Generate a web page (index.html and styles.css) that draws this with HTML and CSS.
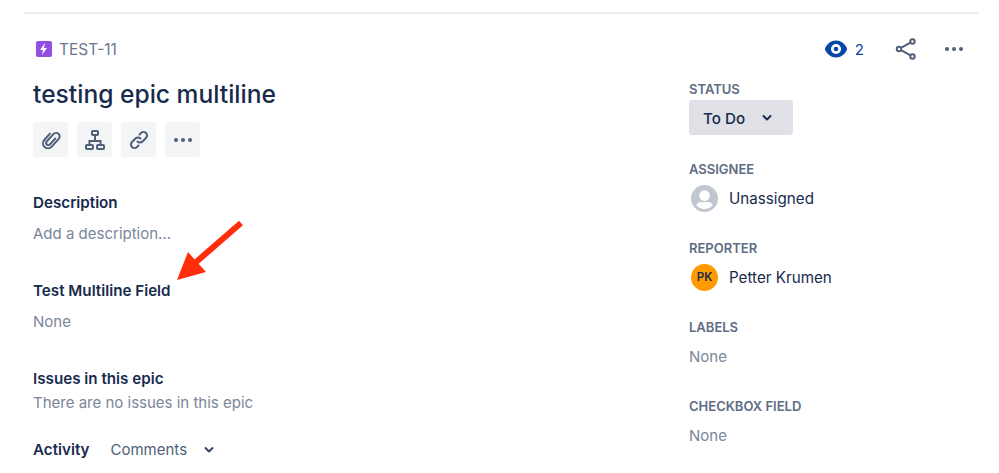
FILE: index.html
```html
<!DOCTYPE html>
<html lang="en">

<head>
    <meta charset="UTF-8">
    <title>TEST-11</title>
    <link rel="stylesheet" href="styles.css">
</head>

<body>
    <div class="rule"></div>

    <div class="issue">
        <div class="main">
            <div class="issue-key">
                <span class="epic-icon">
                    <svg width="10" height="12" viewBox="0 0 10 12"><path d="M6 0 1 7h3l-1 5 5-7H5z" fill="#fff"/></svg>
                </span>
                <span class="key-text">TEST-11</span>
            </div>

            <h1>testing epic multiline</h1>

            <div class="toolbar">
                <button class="tool">
                    <svg width="24" height="24" viewBox="0 0 24 24" fill="none" stroke="#505f79" stroke-width="2" stroke-linecap="round"><path transform="rotate(42 12 12)" d="M14.200 8v8a2.200 2.200 0 0 1-4.400 0V6a3.600 3.600 0 0 1 7.200 0v10.500a5 5 0 0 1-10 0V8"/></svg>
                </button>
                <button class="tool">
                    <svg width="24" height="24" viewBox="0 0 24 24" fill="none" stroke="#505f79" stroke-width="2"><rect x="9" y="3" width="6" height="4" rx="1"/><rect x="3" y="17" width="7" height="4" rx="1"/><rect x="14" y="17" width="7" height="4" rx="1"/><path d="M12 7v6M6.500 17v-4h11v4"/></svg>
                </button>
                <button class="tool">
                    <svg width="24" height="24" viewBox="0 0 24 24" fill="none" stroke="#505f79" stroke-width="2" stroke-linecap="round"><path d="M10.500 13.500a3.500 3.500 0 0 0 5 0l3.500-3.500a3.500 3.500 0 0 0-5-5l-1.500 1.500"/><path d="M13.500 10.500a3.500 3.500 0 0 0-5 0L5 14a3.500 3.500 0 0 0 5 5l1.500-1.500"/></svg>
                </button>
                <button class="tool">
                    <svg width="24" height="24" viewBox="0 0 24 24" fill="#505f79"><circle cx="5" cy="12" r="2"/><circle cx="12" cy="12" r="2"/><circle cx="19" cy="12" r="2"/></svg>
                </button>
            </div>

            <section class="field field-description">
                <h2>Description</h2>
                <p class="placeholder">Add a description...</p>
            </section>

            <section class="field field-multiline">
                <h2>Test Multiline Field</h2>
                <p class="placeholder">None</p>
            </section>

            <section class="field field-epic">
                <h2>Issues in this epic</h2>
                <p class="placeholder">There are no issues in this epic</p>
            </section>

            <div class="activity">
                <h2>Activity</h2>
                <span class="activity-filter">Comments</span>
                <svg width="10" height="8" viewBox="0 0 10 8" fill="none" stroke="#344563" stroke-width="2" stroke-linecap="round" stroke-linejoin="round"><path d="M1.500 2 5 5.500 8.500 2"/></svg>
            </div>
        </div>

        <aside class="side">
            <div class="actions">
                <span class="watchers">
                    <svg width="24" height="18" viewBox="0 0 24 18"><path d="M12 .5C6 .5 1.800 5.500.8 9c1 3.500 5.200 8.500 11.200 8.500S22.200 12.500 23.200 9C22.200 5.500 18 .5 12 .5z" fill="#0747a6"/><circle cx="12" cy="9" r="5" fill="#fff"/><circle cx="12" cy="9" r="2.300" fill="#0747a6"/></svg>
                    2
                </span>
                <svg class="share" width="24" height="24" viewBox="0 0 24 24" fill="none" stroke="#505f79" stroke-width="2"><circle cx="18.500" cy="4.500" r="2.200"/><circle cx="18.500" cy="19.500" r="2.200"/><circle cx="5" cy="12" r="2.200"/><path d="M7 10.900 16.500 5.600M7 13.100l9.500 5.300"/></svg>
                <svg class="more" width="24" height="24" viewBox="0 0 24 24" fill="#505f79"><circle cx="5" cy="12" r="2"/><circle cx="12" cy="12" r="2"/><circle cx="19" cy="12" r="2"/></svg>
            </div>

            <div class="side-field status-field">
                <h3>STATUS</h3>
                <button class="status">
                    To Do
                    <svg width="10" height="8" viewBox="0 0 10 8" fill="none" stroke="#172b4d" stroke-width="2" stroke-linecap="round" stroke-linejoin="round"><path d="M1.500 2 5 5.500 8.500 2"/></svg>
                </button>
            </div>

            <div class="side-field">
                <h3>ASSIGNEE</h3>
                <div class="person">
                    <span class="avatar">
                        <svg width="27" height="27" viewBox="0 0 28 28"><circle cx="14" cy="14" r="14" fill="#c1c7d0"/><circle cx="14" cy="11" r="5.500" fill="#fff"/><path d="M5.500 21c1-2.700 3-3.500 5-3.500h7c2 0 4 .8 5 3.500-2 2.500-5 4-8.500 4s-6.500-1.500-8.500-4z" fill="#fff"/></svg>
                    </span>
                    <span>Unassigned</span>
                </div>
            </div>

            <div class="side-field">
                <h3>REPORTER</h3>
                <div class="person">
                    <span class="avatar avatar-pk">PK</span>
                    <span>Petter Krumen</span>
                </div>
            </div>

            <div class="side-field">
                <h3>LABELS</h3>
                <p class="placeholder">None</p>
            </div>

            <div class="side-field">
                <h3>CHECKBOX FIELD</h3>
                <p class="placeholder">None</p>
            </div>
        </aside>

        <svg class="arrow" width="70" height="64" viewBox="0 0 70 64"><path d="M64 2 18 42" stroke="#ff2d0a" stroke-width="6" fill="none"/><path d="M0 59 11 31l18 20z" fill="#ff2d0a"/></svg>
    </div>
</body>

</html>
```

FILE: styles.css
```css
html,
body {
    height: 473px;
    overflow: hidden;
}

body {
    font-family: Inter, "Liberation Sans", sans-serif;
    margin: 0;
    padding: 12px 21px 0 24px;
    background-color: #fff;
    color: #172b4d;
}

h1,
h2,
h3,
p {
    margin: 0;
    font-weight: inherit;
}

.rule {
    height: 2px;
    background-color: #ebecf0;
}

.issue {
    position: relative;
    display: flex;
    padding-left: 9px;
}

.main {
    width: 656px;
}

.issue-key {
    display: flex;
    align-items: center;
    gap: 7px;
    height: 16px;
    margin-top: 27px;
    font-size: 15.500px;
    line-height: 16px;
    color: #6b778c;
}

.key-text {
    padding-top: 2px;
}

.epic-icon {
    display: flex;
    align-items: center;
    justify-content: center;
    width: 16px;
    height: 16px;
    margin-left: 3px;
    border-radius: 2px;
    background-color: #904ee2;
}

h1 {
    margin-top: 21px;
    font-size: 24.600px;
    line-height: 32px;
    font-weight: 500;
}

.toolbar {
    display: flex;
    gap: 9px;
    margin-top: 12px;
}

.tool {
    display: flex;
    align-items: center;
    justify-content: center;
    width: 35px;
    height: 35px;
    padding: 0;
    border: none;
    border-radius: 3px;
    background-color: #f4f5f7;
}

h2 {
    font-size: 15.200px;
    line-height: 20px;
    font-weight: 600;
}

.placeholder {
    font-size: 15px;
    line-height: 20px;
    color: #7a869a;
}

.field-description {
    margin-top: 36px;
}

.field-description .placeholder {
    margin-top: 11px;
}

.field-multiline {
    margin-top: 37px;
}

.field-multiline .placeholder {
    margin-top: 11px;
}

.field-epic {
    margin-top: 37px;
}

.field-epic .placeholder {
    margin-top: 4px;
}

.activity {
    display: flex;
    align-items: center;
    margin-top: 27px;
}

.activity-filter {
    margin-left: 21px;
    font-size: 15px;
    line-height: 20px;
    color: #505f79;
}

.activity svg {
    margin-left: 17px;
}

.side {
    flex: 1;
}

.actions {
    display: flex;
    align-items: center;
    justify-content: flex-end;
    height: 24px;
    margin-top: 23px;
    margin-bottom: 20px;
    padding-right: 12px;
}

.watchers {
    display: flex;
    align-items: center;
    gap: 7px;
    font-size: 15px;
    color: #0747a6;
}

.share {
    margin-left: 30px;
}

.more {
    margin-left: 24px;
}

.side-field {
    height: 79px;
}

.status-field {
    height: 80px;
}

h3 {
    font-size: 13px;
    line-height: 16px;
    font-weight: 600;
    color: #5e6c84;
}

.status {
    display: flex;
    align-items: center;
    gap: 17px;
    width: 104px;
    height: 35px;
    margin-top: 3px;
    padding: 1px 0 0 14px;
    border: none;
    border-radius: 3px;
    background-color: #dfe1e6;
    font-family: inherit;
    font-size: 15.200px;
    font-weight: 500;
    color: #172b4d;
}

.person {
    display: flex;
    align-items: center;
    gap: 11px;
    height: 28px;
    margin-top: 7px;
    font-size: 15.200px;
}

.avatar {
    display: flex;
    align-items: center;
    justify-content: center;
    width: 27px;
    height: 27px;
    margin-left: 2px;
}

.avatar-pk {
    border-radius: 50%;
    background-color: #ff9a00;
    font-size: 11.500px;
    font-weight: 600;
}

.side-field .placeholder {
    margin-top: 12px;
}

.arrow {
    position: absolute;
    left: 153px;
    top: 207px;
}
```
